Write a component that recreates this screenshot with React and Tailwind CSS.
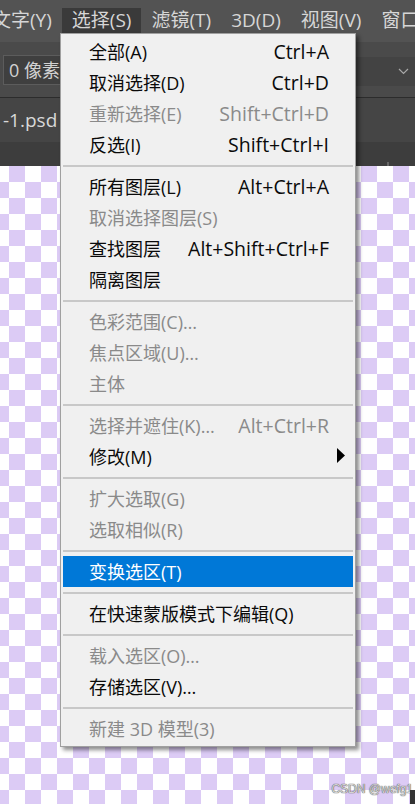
const FONT = "font-['Open_Sans','Noto_Sans_CJK_SC',sans-serif]";

const MENUBAR = ["文字(Y)", "选择(S)", "滤镜(T)", "3D(D)", "视图(V)", "窗口(W)"];

const ITEMS = [
  { label: "全部(A)", shortcut: "Ctrl+A" },
  { label: "取消选择(D)", shortcut: "Ctrl+D" },
  { label: "重新选择(E)", shortcut: "Shift+Ctrl+D", disabled: true },
  { label: "反选(I)", shortcut: "Shift+Ctrl+I" },
  "sep",
  { label: "所有图层(L)", shortcut: "Alt+Ctrl+A" },
  { label: "取消选择图层(S)", disabled: true },
  { label: "查找图层", shortcut: "Alt+Shift+Ctrl+F" },
  { label: "隔离图层" },
  "sep",
  { label: "色彩范围(C)…", disabled: true },
  { label: "焦点区域(U)…", disabled: true },
  { label: "主体", disabled: true },
  "sep",
  { label: "选择并遮住(K)…", shortcut: "Alt+Ctrl+R", disabled: true },
  { label: "修改(M)", sub: true },
  "sep",
  { label: "扩大选取(G)", disabled: true },
  { label: "选取相似(R)", disabled: true },
  "sep",
  { label: "变换选区(T)", active: true },
  "sep",
  { label: "在快速蒙版模式下编辑(Q)" },
  "sep",
  { label: "载入选区(O)…", disabled: true },
  { label: "存储选区(V)…" },
  "sep",
  { label: "新建 3D 模型(3)", disabled: true },
];

function MenuRow({ item }) {
  const color = item.active
    ? "bg-[#0078d7] text-white"
    : item.disabled
    ? "text-[#8a8a8a]"
    : "text-[#0a0a0a]";
  return (
    <div className={`relative mx-[2px] flex h-[31px] items-center justify-between pl-[26px] pr-[24px] leading-none ${color}`}>
      <span className="text-[18px]">{item.label}</span>
      {item.shortcut && <span className="text-[19.5px]">{item.shortcut}</span>}
      {item.sub && (
        <svg className="absolute right-[8px] top-[7px]" width="8" height="15" viewBox="0 0 8 15">
          <polygon points="0,0 8,7.5 0,15" fill="#000" />
        </svg>
      )}
    </div>
  );
}

export default function App() {
  return (
    <div className={`relative flex h-[804px] w-[415px] flex-col overflow-hidden bg-[#535353] ${FONT}`}>
      {/* menu bar */}
      <div className="flex h-[42px] shrink-0 items-start bg-[#535353] pt-[8px] text-[19px] leading-none text-[#d6d6d6]">
        <div className="ml-[-18px] flex whitespace-nowrap">
          {MENUBAR.map((m) => (
            <div
              key={m}
              className={`flex h-[25px] items-center px-[10px] ${m === "选择(S)" ? "bg-[#3a3a3a]" : ""}`}
            >
              {m}
            </div>
          ))}
        </div>
      </div>

      {/* options bar */}
      <div className="flex h-[55px] shrink-0 items-start bg-[#4a4a4a]">
        <div className="ml-[3px] mt-[13px] flex h-[30px] w-[200px] items-center border border-[#5c5c5c] bg-[#3f3f3f] pl-[5px] text-[18px] leading-none text-[#d2d2d2]">
          0 像素
        </div>
        <div className="ml-auto mt-[15px] flex h-[29px] w-[160px] items-center justify-end bg-[#434343] pr-[6px]">
          <svg width="11" height="7" viewBox="0 0 11 7">
            <path d="M1 1l4.5 4.5L10 1" fill="none" stroke="#a8a8a8" strokeWidth="1.2" />
          </svg>
        </div>
      </div>
      <div className="h-px shrink-0 bg-[#2c2c2c]" />

      {/* document tab */}
      <div className="flex h-[44px] shrink-0 items-center bg-[#454545] pl-[3px] text-[19px] leading-none whitespace-nowrap text-[#d8d8d8]">
        -1.psd @ 66.7%
      </div>
      <div className="flex h-[24px] shrink-0 items-end bg-[#3d3d3d] pl-[387px]">
        <div className="h-[4px] w-[2px] bg-[#666666]" />
      </div>

      {/* canvas */}
      <div className="flex-1 bg-[conic-gradient(#dccbf5_25%,#ffffff_0_50%,#dccbf5_0_75%,#ffffff_0)] bg-[length:32px_32px] bg-[position:25px_0px]" />

      {/* select menu */}
      <div className="absolute left-[60px] top-[33px] w-[296px] border border-[#a0a0a0] bg-[#f0f0f0] py-[2px] shadow-[3px_3px_4px_rgba(0,0,0,0.45)]">
        {ITEMS.map((item, i) =>
          item === "sep" ? (
            <div key={i} className="mx-[2px] h-[11px] pt-[5px]">
              <div className="h-[2px] bg-[#c8c8c8]" />
            </div>
          ) : (
            <MenuRow key={i} item={item} />
          )
        )}
      </div>

      {/* watermark */}
      <div className="absolute bottom-[9px] right-[2px] font-['Liberation_Sans',sans-serif] text-[12px] leading-none text-[#d4d4d4] [text-shadow:0_0_1px_#555,0_0_1px_#555]">
        CSDN @wefg1
      </div>
      <div className="absolute bottom-0 right-0 h-[14px] w-[5px] bg-[#333333]" />
    </div>
  );
}
